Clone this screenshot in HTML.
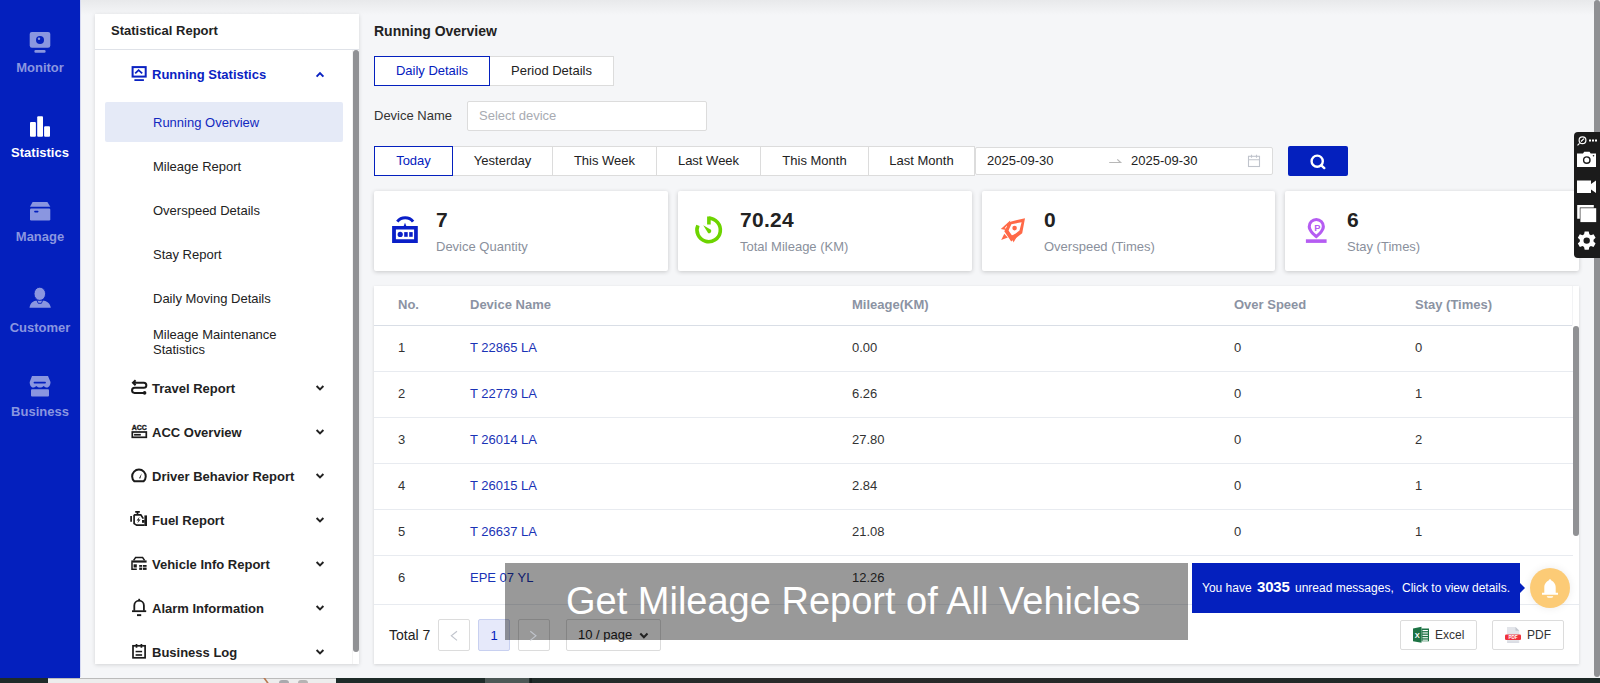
<!DOCTYPE html>
<html><head><meta charset="utf-8">
<style>
*{box-sizing:border-box;margin:0;padding:0}
html,body{width:1600px;height:683px;overflow:hidden;font-family:"Liberation Sans",sans-serif;background:#f5f6f8;color:#222;font-size:13px}
.a{position:absolute;white-space:nowrap;line-height:20px}
svg{position:absolute;overflow:visible}
#nav{position:absolute;left:0;top:0;width:80px;height:678px;background:#0420be}
#navline{position:absolute;left:80px;top:0;width:1px;height:677px;background:#d5d9f2}
.ni{position:absolute;left:0;width:80px;text-align:center;font-size:13px;font-weight:bold;color:#8a96e0;line-height:20px}
.ni.act{color:#fff}
#topshadow{position:absolute;left:81px;top:0;width:1513px;height:15px;background:linear-gradient(#e8e9eb,#f5f6f8)}
#panel{position:absolute;left:95px;top:14px;width:264px;height:650px;background:#fff;box-shadow:0 1px 4px rgba(0,0,0,.14)}
.hd{position:absolute;left:0;top:0;width:264px;height:36px;border-bottom:1px solid #dfe2e8;font-weight:bold;font-size:13px;padding-left:16px;line-height:33px;color:#222}
.mi{position:absolute;left:58px;font-size:13px;color:#222;white-space:nowrap;line-height:20px}
.mg{position:absolute;left:57px;font-size:13px;font-weight:bold;color:#222;white-space:nowrap;line-height:20px}
.btn{position:absolute;height:30px;background:#fff;border:1px solid #dcdcdc;font-size:13px;text-align:center;line-height:28px;color:#222}
.btn.on{border-color:#0420be;color:#0420be;z-index:2}
.card{position:absolute;top:191px;height:80px;background:#fff;box-shadow:0 1px 4px rgba(0,0,0,.19);border-radius:2px}
.card .v{position:absolute;left:62px;top:17px;font-size:21px;font-weight:bold;color:#222;line-height:24px;letter-spacing:.3px}
.card .l{position:absolute;left:62px;top:46px;font-size:13px;color:#8a909c;line-height:20px}
#table{position:absolute;left:374px;top:286px;width:1205px;height:378px;background:#fff;box-shadow:0 1px 3px rgba(0,0,0,.14)}
.th{position:absolute;top:9px;font-size:13px;font-weight:bold;color:#8b93a3;line-height:20px}
.tr{position:absolute;left:0;width:1199px;height:46px;border-bottom:1px solid #e8ebf0}
.td{position:absolute;top:12px;font-size:13px;color:#333;line-height:20px}
.td.lk{color:#1a33b6}
</style></head>
<body>
<div id="topshadow"></div>
<div id="nav">
  <svg width="80" height="420" style="left:0;top:0">
    <g fill="#8a96e0">
      <rect x="29.7" y="31.9" width="20.6" height="15.9" rx="2.2"/>
      <rect x="34.4" y="50.1" width="11.2" height="2.6" rx="1.2"/>
    </g>
    <circle cx="40" cy="40" r="4" fill="#0420be"/>
    <circle cx="39" cy="38.8" r="1.2" fill="#8a96e0"/>
    <g fill="#fff">
      <rect x="30" y="122" width="5.9" height="14.7" rx="1"/>
      <rect x="37.2" y="116.2" width="5.8" height="20.5" rx="1"/>
      <rect x="44.1" y="126.2" width="5.9" height="10.5" rx="1"/>
    </g>
    <g fill="#8a96e0">
      <path d="M32.6 201.9 H47.4 L50.3 206.8 H30 Z"/>
      <rect x="30" y="208.6" width="20.3" height="11.8" rx="1.2"/>
            <path d="M29.5 307.8 C30 302.8 33 300.8 37.2 300.4 H42.4 C46.6 300.8 50.2 302.8 50.8 307.8 Z"/>
      <path d="M32 376 H48 L50.5 382 C50.5 385 49 387.5 47 387.5 C45.5 387.5 44.5 386.8 43.5 386 C42.5 387 41.5 387.5 40 387.5 C38.5 387.5 37.5 387 36.5 386 C35.5 386.8 34.5 387.5 33 387.5 C31 387.5 29.7 385 29.7 382 Z"/>
      <rect x="31" y="389.3" width="18" height="7.2" rx="1"/>
    </g>
    <rect x="34.1" y="210.8" width="4.4" height="1.6" rx=".8" fill="#0420be"/>
    <path d="M36.8 300 L38.2 303.3 H41.4 L42.8 300" fill="none" stroke="#0420be" stroke-width=".9"/>
    <ellipse cx="39.8" cy="293.8" rx="5.8" ry="6.6" fill="#8a96e0" stroke="#0420be" stroke-width=".9"/>
    <rect x="33.6" y="381.8" width="12.3" height="1.7" rx=".8" fill="#0420be"/>
  </svg>
  <div class="ni" style="top:58px">Monitor</div>
  <div class="ni act" style="top:143px">Statistics</div>
  <div class="ni" style="top:227px">Manage</div>
  <div class="ni" style="top:318px">Customer</div>
  <div class="ni" style="top:402px">Business</div>
</div>
<div id="navline"></div>

<div id="panel">
  <div class="hd">Statistical Report</div>
  <div style="position:absolute;left:257px;top:36px;width:1px;height:614px;background:#f3f3f3"></div>
  <div style="position:absolute;left:258px;top:36px;width:6px;height:602px;background:#909194;border-radius:3px"></div>
  <div style="position:absolute;left:10px;top:88px;width:238px;height:40px;background:#e5eaf7;border-radius:2px"></div>
  <div class="mg" style="top:51px;color:#0a22c2">Running Statistics</div>
  <div class="mi" style="top:99px;color:#1229c0">Running Overview</div>
  <div class="mi" style="top:143px">Mileage Report</div>
  <div class="mi" style="top:187px">Overspeed Details</div>
  <div class="mi" style="top:231px">Stay Report</div>
  <div class="mi" style="top:275px">Daily Moving Details</div>
  <div class="mi" style="top:313px;line-height:15px">Mileage Maintenance<br>Statistics</div>
  <div class="mg" style="top:365px">Travel Report</div>
  <div class="mg" style="top:409px">ACC Overview</div>
  <div class="mg" style="top:453px">Driver Behavior Report</div>
  <div class="mg" style="top:497px">Fuel Report</div>
  <div class="mg" style="top:541px">Vehicle Info Report</div>
  <div class="mg" style="top:585px">Alarm Information</div>
  <div class="mg" style="top:629px">Business Log</div>
</div>


<div class="a" style="left:374px;top:21px;font-size:14px;font-weight:bold;color:#222">Running Overview</div>
<div class="btn on" style="left:374px;top:56px;width:116px">Daily Details</div>
<div class="btn" style="left:489px;top:56px;width:125px">Period Details</div>
<div class="a" style="left:374px;top:106px;color:#333">Device Name</div>
<div style="position:absolute;left:467px;top:101px;width:240px;height:30px;background:#fff;border:1px solid #dcdcdc;border-radius:2px"></div>
<div class="a" style="left:479px;top:106px;color:#a8abb2">Select device</div>
<div class="btn on" style="left:374px;top:146px;width:79px">Today</div>
<div class="btn" style="left:452px;top:146px;width:101px">Yesterday</div>
<div class="btn" style="left:552px;top:146px;width:105px">This Week</div>
<div class="btn" style="left:656px;top:146px;width:105px">Last Week</div>
<div class="btn" style="left:760px;top:146px;width:109px">This Month</div>
<div class="btn" style="left:868px;top:146px;width:107px">Last Month</div>
<div style="position:absolute;left:975px;top:147px;width:298px;height:28px;background:#fff;border:1px solid #dcdcdc;border-radius:2px"></div>
<div class="a" style="left:987px;top:151px;color:#222">2025-09-30</div>
<div class="a" style="left:1131px;top:151px;color:#222">2025-09-30</div>
<div style="position:absolute;left:1288px;top:146px;width:60px;height:30px;background:#0420be;border-radius:2px"></div>

<div class="card" style="left:374px;width:294px"><div class="v">7</div><div class="l">Device Quantity</div></div>
<div class="card" style="left:678px;width:294px"><div class="v">70.24</div><div class="l">Total Mileage (KM)</div></div>
<div class="card" style="left:982px;width:293px"><div class="v">0</div><div class="l">Overspeed (Times)</div></div>
<div class="card" style="left:1285px;width:294px"><div class="v">6</div><div class="l">Stay (Times)</div></div>

<div id="table">
  <div style="position:absolute;left:0;top:0;width:1198px;height:40px;border-bottom:1px solid #d9dee6"></div><div style="position:absolute;left:1198px;top:0;width:1px;height:40px;background:#f2f3f5"></div>
  <div class="th" style="left:24px">No.</div>
  <div class="th" style="left:96px">Device Name</div>
  <div class="th" style="left:478px">Mileage(KM)</div>
  <div class="th" style="left:860px">Over Speed</div>
  <div class="th" style="left:1041px">Stay (Times)</div>
  <div style="position:absolute;left:0;top:40px;width:1205px;height:279px;overflow:hidden;border-bottom:1px solid #e8ebf0">
    <div class="tr" style="top:0px"><div class="td" style="left:24px">1</div><div class="td lk" style="left:96px">T 22865 LA</div><div class="td" style="left:478px">0.00</div><div class="td" style="left:860px">0</div><div class="td" style="left:1041px">0</div></div>
    <div class="tr" style="top:46px"><div class="td" style="left:24px">2</div><div class="td lk" style="left:96px">T 22779 LA</div><div class="td" style="left:478px">6.26</div><div class="td" style="left:860px">0</div><div class="td" style="left:1041px">1</div></div>
    <div class="tr" style="top:92px"><div class="td" style="left:24px">3</div><div class="td lk" style="left:96px">T 26014 LA</div><div class="td" style="left:478px">27.80</div><div class="td" style="left:860px">0</div><div class="td" style="left:1041px">2</div></div>
    <div class="tr" style="top:138px"><div class="td" style="left:24px">4</div><div class="td lk" style="left:96px">T 26015 LA</div><div class="td" style="left:478px">2.84</div><div class="td" style="left:860px">0</div><div class="td" style="left:1041px">1</div></div>
    <div class="tr" style="top:184px"><div class="td" style="left:24px">5</div><div class="td lk" style="left:96px">T 26637 LA</div><div class="td" style="left:478px">21.08</div><div class="td" style="left:860px">0</div><div class="td" style="left:1041px">1</div></div>
    <div class="tr" style="top:230px;border-bottom:0"><div class="td" style="left:24px">6</div><div class="td lk" style="left:96px">EPE 07 YL</div><div class="td" style="left:478px">12.26</div><div class="td" style="left:860px"></div><div class="td" style="left:1041px"></div></div>

    <div style="position:absolute;left:1199px;top:0;width:6px;height:210px;background:#909194;border-radius:3px"></div>
  </div>
  <div class="a" style="left:15px;top:339px;color:#222;font-size:14px">Total 7</div>
  <div style="position:absolute;left:64px;top:333px;width:32px;height:32px;border:1px solid #dcdcdc;background:#fff;border-radius:2px"></div>
  <div style="position:absolute;left:104px;top:333px;width:32px;height:32px;border:1px solid #c8d0f0;background:#e6e9fa;border-radius:2px;text-align:center;line-height:31px;color:#0420be">1</div>
  <div style="position:absolute;left:144px;top:333px;width:32px;height:32px;border:1px solid #dcdcdc;background:#fff;border-radius:2px"></div>
  <div style="position:absolute;left:192px;top:333px;width:95px;height:32px;border:1px solid #dcdcdc;background:#fff;border-radius:2px"></div>
  <div class="a" style="left:204px;top:339px;color:#222">10 / page</div>
  <div style="position:absolute;left:1026px;top:334px;width:77px;height:30px;border:1px solid #dcdcdc;background:#fff;border-radius:2px"></div>
  <div class="a" style="left:1061px;top:339px;color:#333;font-size:12px">Excel</div>
  <div style="position:absolute;left:1118px;top:334px;width:72px;height:30px;border:1px solid #dcdcdc;background:#fff;border-radius:2px"></div>
  <div class="a" style="left:1153px;top:339px;color:#333;font-size:12px">PDF</div>
</div>


<!-- right page scrollbar -->
<div style="position:absolute;left:1594px;top:0;width:6px;height:677px;background:#8f9093;border-radius:3px"></div>
<!-- bottom strip -->
<div style="position:absolute;left:0;top:678px;width:1600px;height:5px;background:linear-gradient(90deg,#1e2b29 0%,#1e2b29 30%,#2a2a2a 50%,#1c2826 100%)"></div>
<div style="position:absolute;left:48px;top:678px;width:288px;height:5px;background:#ededed;border-top:1px solid #bbb"></div>
<div style="position:absolute;left:485px;top:678px;width:44px;height:5px;background:#4d5856"></div>
<div style="position:absolute;left:265px;top:678px;width:2px;height:5px;background:#b87850;transform:skewX(35deg)"></div>
<div style="position:absolute;left:279px;top:680px;width:10px;height:3px;background:#a9a9ad;border-radius:5px 5px 0 0"></div>
<div style="position:absolute;left:298px;top:680px;width:10px;height:3px;background:#b5b3b3;border-radius:5px 5px 0 0"></div>
<div style="position:absolute;left:530px;top:678px;width:2px;height:5px;background:#141c1b"></div>
<!-- toolbar -->
<div style="position:absolute;left:1574px;top:132px;width:26px;height:126px;background:#1b1b1b;border-radius:4px 0 0 4px"></div>
<!-- overlay -->
<div style="position:absolute;left:505px;top:563px;width:683px;height:77px;background:rgba(0,0,0,.4)"></div>
<div class="a" style="left:566px;top:579px;font-size:38px;line-height:44px;color:#fff">Get Mileage Report of All Vehicles</div>
<!-- notification -->
<div style="position:absolute;left:1192px;top:563px;width:328px;height:50px;background:#0420be"></div>
<div style="position:absolute;left:1520px;top:583px;width:0;height:0;border-top:5px solid transparent;border-bottom:5px solid transparent;border-left:5px solid #0420be"></div>
<div class="a" style="left:1202px;top:578px;font-size:12px;color:#fff">You have</div>
<div class="a" style="left:1257px;top:577px;font-size:15px;font-weight:bold;color:#fff;letter-spacing:-.2px">3035</div>
<div class="a" style="left:1295px;top:578px;font-size:12px;color:#fff">unread messages,</div>
<div class="a" style="left:1402px;top:578px;font-size:12px;color:#fff">Click to view details.</div>
<div style="position:absolute;left:1530px;top:568px;width:40px;height:40px;border-radius:50%;background:#fccb76;box-shadow:0 0 8px rgba(0,0,0,.08)"></div>

<svg width="1600" height="683" style="left:0;top:0;z-index:5;pointer-events:none">
 <!-- running statistics -->
 <g fill="none" stroke="#0a22c2" stroke-width="2">
  <rect x="132.6" y="67.1" width="13.1" height="9.5"/>
  <path d="M135.2 73.4 L138.6 70.2 L142.2 73.4" stroke-width="1.8"/>
 </g>
 <rect x="134.4" y="79.2" width="9.5" height="1.8" fill="#0a22c2"/>
 <path d="M316.6 76.6 L320 73.1 L323.4 76.6" fill="none" stroke="#0a22c2" stroke-width="2"/>
 <g fill="none" stroke="#222" stroke-width="1.9">
 <path d="M316.6 386 L320 389.5 L323.4 386"/><path d="M316.6 430 L320 433.5 L323.4 430"/><path d="M316.6 474 L320 477.5 L323.4 474"/><path d="M316.6 518 L320 521.5 L323.4 518"/><path d="M316.6 562 L320 565.5 L323.4 562"/><path d="M316.6 606 L320 609.5 L323.4 606"/><path d="M316.6 650 L320 653.5 L323.4 650"/><path d="M316.6 694 L320 697.5 L323.4 694"/>
 </g>
 <!-- travel -->
 <g fill="none" stroke="#1a1a1a" stroke-width="2">
  <path d="M133.5 382.7 H143.8 A2.55 2.55 0 0 1 143.8 387.8 H134.6 A2.55 2.55 0 0 0 134.6 392.9 H144"/>
  <path d="M135.6 380.2 L133 382.7 L135.6 385.2"/>
 </g>
 <circle cx="144.6" cy="392.9" r="1.8" fill="#1a1a1a"/>
 <!-- acc -->
 <text x="139.2" y="430" font-family="Liberation Sans" font-weight="bold" font-size="7" text-anchor="middle" fill="#1a1a1a" stroke="#1a1a1a" stroke-width=".35" textLength="15" lengthAdjust="spacingAndGlyphs">ACC</text>
 <rect x="132.3" y="432" width="14" height="5.3" fill="none" stroke="#1a1a1a" stroke-width="1.7"/>
 <rect x="134.1" y="433.9" width="6.7" height="1.7" fill="#1a1a1a"/>
 <!-- gauge -->
 <path d="M134.3 481.3 A6.8 6.8 0 1 1 143.6 481.3 Z" fill="none" stroke="#1a1a1a" stroke-width="2"/>
 <path d="M139 478.3 L141.8 473.3 L140.3 478.6 Z" fill="#1a1a1a"/>
 <!-- fuel/engine -->
 <g fill="none" stroke="#1a1a1a" stroke-width="1.7">
  <path d="M135.2 511.9 H139.8 M137.5 511.9 V514.8"/>
  <path d="M134.1 514.8 H140.8 L143.3 518.6 M134.1 514.8 V523.6 L136.7 525.2 H144.6"/>
  <path d="M131.1 515.9 V521.7"/>
 </g>
 <rect x="144.4" y="515.4" width="2.6" height="10.6" fill="#1a1a1a"/>
 <rect x="142" y="520" width="2.6" height="2.8" fill="#1a1a1a"/>
 <path d="M139.6 516.8 L136.6 520.6 H138.6 L137.2 523.5 L140.6 519.4 H138.6 Z" fill="#1a1a1a"/>
 <!-- vehicle info -->
 <g fill="none" stroke="#1a1a1a" stroke-width="1.5">
  <path d="M133.6 560.4 L135.6 557.6 H142.6 L144.6 560.4"/>
  <path d="M132 562.2 V569.2 H136.8"/>
 </g>
 <rect x="131.3" y="560.4" width="15.3" height="2.2" fill="#1a1a1a"/>
 <g fill="#1a1a1a">
  <rect x="133.6" y="564.3" width="3.2" height="3.2"/>
  <rect x="139.2" y="565" width="2.8" height="1.8"/><rect x="142.8" y="565" width="3.8" height="1.8"/>
  <rect x="139.2" y="567.6" width="2.8" height="2.3"/><rect x="142.8" y="567.6" width="3.8" height="2.3"/>
 </g>
 <!-- alarm bell -->
 <g fill="none" stroke="#1a1a1a" stroke-width="1.8">
  <path d="M134.3 610.8 V605.5 A4.8 4.8 0 0 1 143.9 605.5 V610.8"/>
  <path d="M132 611.2 H146.2"/>
 </g>
 <rect x="138.3" y="598.8" width="1.8" height="2.4" fill="#1a1a1a"/>
 <rect x="137" y="614.2" width="4.2" height="1.9" fill="#1a1a1a"/>
 <!-- clipboard -->
 <g fill="none" stroke="#1a1a1a" stroke-width="1.7">
  <rect x="133" y="645.8" width="12.1" height="12"/>
  <path d="M136.5 644 V647.8 M141.4 644 V647.8"/>
 </g>
 <rect x="135.6" y="650.8" width="6.5" height="1.5" fill="#1a1a1a"/>
 <rect x="135.6" y="654.2" width="6.5" height="1.6" fill="#1a1a1a"/>

 <!-- card icons -->
 <g fill="#0a1fc8">
  <path d="M392.1 226 H417.8 V242.9 H392.1 Z M395.9 229.6 V239.2 H414.1 V229.6 Z" fill-rule="evenodd"/>
  <circle cx="400.2" cy="234.4" r="2.6"/>
  <rect x="404.2" y="232.1" width="3.5" height="4.7"/>
  <rect x="409.2" y="232.1" width="3.5" height="4.7"/>
  <path d="M403.5 226.5 L405 222.8 L406.5 226.5 Z"/>
 </g>
 <path d="M397.3 221.7 A10 10 0 0 1 413.1 221.7" fill="none" stroke="#0a1fc8" stroke-width="3"/>

 <path d="M708.8 218.3 A11.7 11.7 0 1 1 697.9 225.4" fill="none" stroke="#6dd400" stroke-width="3.6"/>
 <rect x="707.1" y="216.5" width="3.6" height="8" fill="#6dd400"/>
 <path d="M703.2 225.2 L711 229.8 A2.4 2.4 0 0 1 708.2 233.2 Z" fill="#6dd400"/>

 <g fill="#ff6947">
  <path fill-rule="evenodd" d="M1025 218.2 L1022.2 233.3 L1011.2 241.5 L1004.3 231.3 L1009.4 221.9 Z M1021.6 222.3 L1011.4 224.2 L1008.5 230.6 L1012.4 235.9 L1019.5 230.6 Z"/>
  <path fill-rule="evenodd" d="M1010.2 220.5 L1000.8 229.1 L1008.3 230.5 Z M1007 225.6 L1004.6 228.3 L1006.9 228.7 Z"/>
  <path fill-rule="evenodd" d="M1013.5 242.6 L1019.2 232.6 L1011.5 235.6 Z M1014 239.2 L1015.9 235.8 L1013.2 236.8 Z"/>
  <path d="M1001.2 240 L1004.3 233.8 L1007.8 237.4 Z"/>
  <circle cx="1014.6" cy="228.1" r="2.3"/>
 </g>

 <g fill="#b55cf2">
  <path fill-rule="evenodd" d="M1316.3 217.9 A8.6 8.6 0 0 1 1324.9 226.5 C1324.9 231 1320.5 235 1316.3 238.6 C1312.1 235 1307.7 231 1307.7 226.5 A8.6 8.6 0 0 1 1316.3 217.9 Z M1316.3 221 A5.5 5.5 0 0 0 1310.8 226.5 C1310.8 229.3 1313.5 232.2 1316.3 234.5 C1319.1 232.2 1321.8 229.3 1321.8 226.5 A5.5 5.5 0 0 0 1316.3 221 Z"/>
  <rect x="1305.9" y="239.3" width="20.7" height="3.6"/>
 </g>
 <text x="1317.3" y="230.8" font-family="Liberation Sans" font-weight="bold" font-size="9.3" text-anchor="middle" fill="#b55cf2">P</text>

 <!-- date picker arrow & calendar -->
 <path d="M1109.2 162.5 H1120.6 L1117.3 159.4" fill="none" stroke="#b8b8b8" stroke-width="1.2"/>
 <g fill="none" stroke="#c0c4cc" stroke-width="1.1">
  <rect x="1248.5" y="156.3" width="11" height="10.2"/>
  <path d="M1248.5 159.8 H1259.5 M1251.5 154.8 V157.8 M1256.5 154.8 V157.8"/>
 </g>
 <!-- search -->
 <g fill="none" stroke="#fff" stroke-width="2.4">
  <circle cx="1317.2" cy="161.2" r="5.6"/>
  <path d="M1321.3 165.3 L1324.3 168.1" stroke-linecap="round"/>
 </g>
 <!-- pagination -->
 <path d="M457 631.2 L451.3 635.8 L457 640.4" fill="none" stroke="#c0c4cc" stroke-width="1.1"/>
 <path d="M530.3 631.2 L536 635.8 L530.3 640.4" fill="none" stroke="#c0c4cc" stroke-width="1.1"/>
 <path d="M640.3 633.5 L643.9 637.2 L647.5 633.5" fill="none" stroke="#222" stroke-width="2"/>

 <!-- excel -->
 <path d="M1413 628.5 L1421.5 626.8 V642.8 L1413 641.2 Z" fill="#1d7344"/>
 <rect x="1421.5" y="628.5" width="7.5" height="12.8" fill="#1d7344"/>
 <g fill="#fff"><rect x="1422.5" y="630" width="5.4" height="1.1"/><rect x="1422.5" y="632.4" width="5.4" height="1.1"/><rect x="1422.5" y="634.8" width="5.4" height="1.1"/><rect x="1422.5" y="637.2" width="5.4" height="1.1"/><rect x="1422.5" y="639.6" width="5.4" height="1.1"/></g>
 <text x="1417.2" y="638.2" font-family="Liberation Sans" font-weight="bold" font-size="7.5" text-anchor="middle" fill="#fff">X</text>
 <!-- pdf -->
 <path d="M1507 627 H1515.5 L1519.3 630.8 V643 H1507 Z" fill="#e3e5ea"/>
 <path d="M1515.5 627 L1519.3 630.8 H1515.5 Z" fill="#c3c7cf"/>
 <rect x="1505" y="634.5" width="16" height="5.5" rx="1.2" fill="#f0323c"/>
 <text x="1513" y="639.1" font-family="Liberation Sans" font-weight="bold" font-size="4.6" text-anchor="middle" fill="#fff">PDF</text>
 <rect x="1507.3" y="641.6" width="11.5" height="1" fill="#d5d8df"/>

 <!-- bell -->
 <g fill="#fff">
  <path d="M1550 580.2 C1546.7 580.8 1544.3 583.6 1544.3 587.4 V592.8 H1542 V594.8 H1558 V592.8 H1555.7 V587.4 C1555.7 583.6 1553.3 580.8 1550 580.2 Z"/>
  <path d="M1546.8 596.2 H1553.2 A3.2 1.6 0 0 1 1546.8 596.2 Z"/>
  <circle cx="1550" cy="580.5" r="1.2"/>
 </g>

 <!-- toolbar icons -->
 <g fill="#fff">
  <path fill-rule="evenodd" d="M1580.5 153.5 L1583 153.5 L1584.2 151.8 H1589.5 L1590.7 153.5 H1596 V167 H1577 V153.5 Z M1586.8 156.2 A3.9 3.9 0 1 0 1586.8 164 A3.9 3.9 0 1 0 1586.8 156.2 Z M1586.8 157.6 A2.5 2.5 0 1 1 1586.8 162.6 A2.5 2.5 0 1 1 1586.8 157.6 Z"/>
  <circle cx="1593.5" cy="155.8" r=".8" fill="#1b1b1b"/>
  <path d="M1577 180.5 H1591 V184 L1596 180.5 V193 L1591 189.5 V193 H1577 Z"/>
  <path d="M1577.2 205 H1593.8 V207.6 H1579.8 V218.8 H1577.2 Z"/>
  <rect x="1580.4" y="208.2" width="15.8" height="13.9"/>
  <circle cx="1580" cy="141" r="0" />
  <rect x="1589" y="139.5" width="2" height="2"/><rect x="1592" y="139.5" width="2" height="2"/><rect x="1595" y="139.5" width="2" height="2"/>
 </g>
 <g fill="none" stroke="#fff" stroke-width="1.2">
  <circle cx="1582.5" cy="140.2" r="3.4"/>
  <path d="M1581 141.5 L1584 138.6 M1579.5 143.3 L1577.5 145.3"/>
 </g>
 <path fill="#fff" fill-rule="evenodd" d="M1584.06 234.23 L1584.67 231.52 L1588.73 231.52 L1589.34 234.23 L1590.90 235.13 L1593.55 234.31 L1595.57 237.82 L1593.54 239.70 L1593.54 241.50 L1595.57 243.38 L1593.55 246.89 L1590.90 246.07 L1589.34 246.97 L1588.73 249.68 L1584.67 249.68 L1584.06 246.97 L1582.50 246.07 L1579.85 246.89 L1577.83 243.38 L1579.86 241.50 L1579.86 239.70 L1577.83 237.82 L1579.85 234.31 L1582.50 235.13 Z M1589.90 240.60 A3.2 3.2 0 1 0 1583.50 240.60 A3.2 3.2 0 1 0 1589.90 240.60 Z"/>
</svg>


</body></html>
